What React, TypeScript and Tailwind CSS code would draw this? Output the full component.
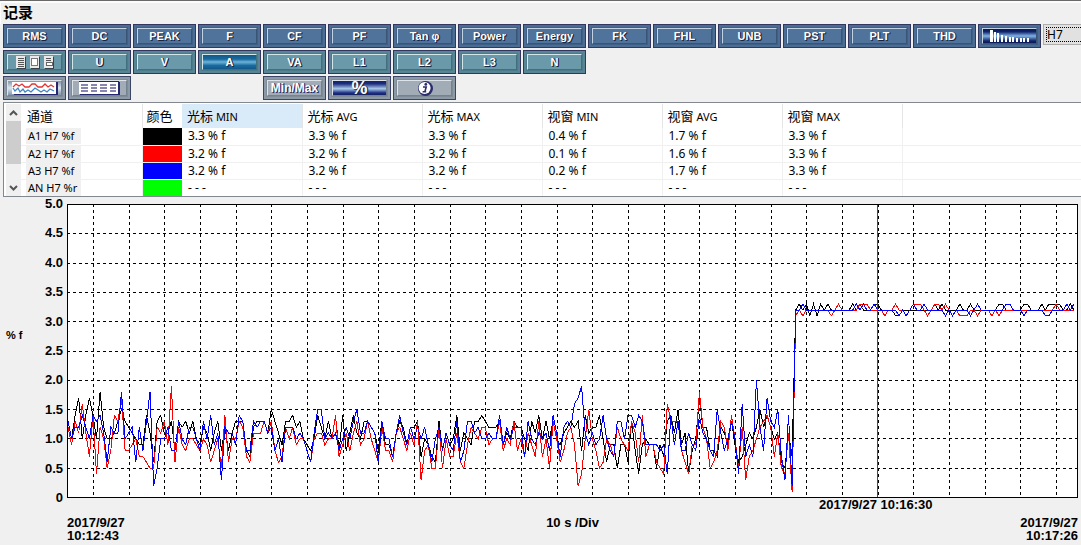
import React from "react";
import clsx from "clsx";

type Tone = "blue" | "teal" | "gray";

interface ToolButtonProps {
  tone: Tone;
  label: string;
  face?: string;
  children?: React.ReactNode;
}

const frameTones: Record<Tone, string> = {
  blue: "border-[#33375f] bg-[#4a6c95]",
  teal: "border-[#33375f] bg-[#588595]",
  gray: "border-[#3c4468] bg-[#8c99a6]",
};

const faceTones: Record<Tone, string> = {
  blue: "border-t-[#c3d2e2] border-l-[#c3d2e2] border-r-[#3a5474] border-b-[#3a5474] bg-[#50739b] outline-[#3f5f85]",
  teal: "border-t-[#d3e6ea] border-l-[#d3e6ea] border-r-[#41707c] border-b-[#41707c] bg-[#6a9aa9] outline-[#4c7a88]",
  gray: "border-t-[#dde3e8] border-l-[#dde3e8] border-r-[#75828f] border-b-[#75828f] bg-[#a1acb6] outline-[#7f8c98]",
};

const ToolButton: React.FC<ToolButtonProps> = ({ tone, label, face, children }) => (
  <button
    type="button"
    aria-label={label}
    className={clsx("h-6 w-[63px] shrink-0 border p-[3px]", frameTones[tone])}
  >
    <span
      className={clsx(
        "flex h-full w-full items-center justify-center border leading-none font-bold text-white outline outline-1",
        faceTones[tone],
        face ?? "text-[11px] [text-shadow:1px_0_0_#1a2540,1px_1px_0_#1a2540]"
      )}
    >
      {children ?? label}
    </span>
  </button>
);

const quantities = [
  "RMS", "DC", "PEAK", "F", "CF", "PF", "Tan φ", "Power",
  "Energy", "FK", "FHL", "UNB", "PST", "PLT", "THD",
];

const phases = ["U", "V", "A", "VA", "L1", "L2", "L3", "N"];

const HarmonicsIcon = () => (
  <svg className="shrink-0" width="42" height="14" viewBox="0 0 42 14" fill="#fff" shapeRendering="crispEdges">
    {[12, 10, 9, 7, 6, 5, 5, 4, 4, 4, 4].map((h, i) => (
      <rect key={i} x={1 + Math.round(i * 3.7)} y={13 - h} width={i === 0 ? 3 : 2} height={h} />
    ))}
  </svg>
);

const PagesIcon = () => (
  <svg className="shrink-0" width="40" height="14" viewBox="0 0 40 14" shapeRendering="crispEdges">
    {[1, 15, 29].map((x) => (
      <g key={x}>
        <rect x={x + 1} y="2" width="9" height="12" fill="#3a4248" />
        <rect x={x} y="1" width="9" height="12" fill="#e9e9e9" />
      </g>
    ))}
    <path d="M3 3.500h6M3 5.500h6M3 7.500h6M3 9.500h6M3 11.500h6M31 3.500h5M31 5.500h5" stroke="#555" />
    <rect x="16.5" y="3.5" width="6" height="7" fill="#fff" stroke="#777" />
    <path d="M31.500 7.500h6v3h-6z" fill="#fff" stroke="#666" />
  </svg>
);

const TrendIcon = () => (
  <svg className="shrink-0" width="46" height="14" viewBox="0 0 46 14">
    <rect x="2" y="1" width="44" height="13" fill="#26286f" />
    <rect width="44" height="12" y="1" fill="#fff" />
    <path d="M1 6l3-3 3 2 3-2 3 3 4 0 3-3 3 0 3 3 4 0 3-3 3 3 3-2 3 2" fill="none" stroke="#e23434" strokeWidth="1.3" />
    <path d="M1 7l2 3 3-3 2 4 3-3 2 3 3-2 3 2 4-4 3 2 3 2 3-2 3 2 3-3 4 2" fill="none" stroke="#3c86c6" strokeWidth="1.3" />
  </svg>
);

const TableIcon = () => (
  <svg className="shrink-0" width="41" height="14" viewBox="0 0 41 14" shapeRendering="crispEdges">
    <rect x="1" y="1" width="40" height="13" fill="#26286f" />
    <rect y="1" width="39" height="12" fill="#fff" />
    <rect width="40" height="1" fill="#26286f" />
    <path
      d="M2 4h7M12 4h6M21 4h7M31 4h6M2 7h7M12 7h6M21 7h7M31 7h6M2 10h7M12 10h6M21 10h7M31 10h6"
      stroke="#8686b0"
      strokeWidth="2"
    />
  </svg>
);

const InfoIcon = () => (
  <svg className="shrink-0" width="16" height="16" viewBox="0 0 16 16">
    <circle cx="8.5" cy="8.5" r="7.5" fill="#2a2c6c" />
    <circle cx="7.6" cy="8" r="6" fill="#fff" />
    <circle cx="8.8" cy="4.4" r="1.4" fill="#2a2c6c" />
    <path d="M6 7h3.2L7.9 11.6h1.3M5.6 11.8h3.6" fill="none" stroke="#2a2c6c" strokeWidth="1.6" />
  </svg>
);

const Toolbar = () => (
  <div className="flex flex-col gap-[2px] pl-[3px]">
    <div className="flex gap-[2px]">
      {quantities.map((q) => (
        <ToolButton key={q} tone="blue" label={q} />
      ))}
      <ToolButton
        tone="blue"
        label="Harmonics"
        face="bg-[linear-gradient(#0b1858,#12246c_20%,#7fb4e4_50%,#12246c_85%,#0b1858)]"
      >
        <HarmonicsIcon />
      </ToolButton>
      <button
        type="button"
        className="h-[21px] min-w-10 flex-1 border border-r-0 border-[#adadad] bg-[#e1e1e1] p-[2px] pr-0 text-left font-['Noto_Sans',sans-serif] text-xs leading-none"
      >
        <span className="flex h-full items-center border border-r-0 border-dotted border-black">H7</span>
      </button>
    </div>
    <div className="flex gap-[2px]">
      <ToolButton tone="teal" label="Pages">
        <PagesIcon />
      </ToolButton>
      {phases.map((p) => (
        <ToolButton
          key={p}
          tone="teal"
          label={p}
          face={
            p === "A"
              ? "text-[11px] [text-shadow:1px_0_0_#1a2540,1px_1px_0_#1a2540] bg-[linear-gradient(#11588c,#1a6a9e_30%,#6db4dc_50%,#1a6a9e_75%,#11588c)]"
              : undefined
          }
        />
      ))}
    </div>
    <div className="flex gap-[2px]">
      <ToolButton tone="gray" label="Trend" face="bg-[linear-gradient(#8295ac,#dbe7f2_50%,#8295ac)]">
        <TrendIcon />
      </ToolButton>
      <ToolButton tone="gray" label="Table">
        <TableIcon />
      </ToolButton>
      <div className="w-32" />
      <ToolButton
        tone="gray"
        label="Min/Max"
        face="text-xs [text-shadow:1px_0_0_#2a2c6c,1px_1px_0_#2a2c6c]"
      />
      <ToolButton
        tone="gray"
        label="%"
        face="text-[18px] [text-shadow:1px_0_0_#1a2540,1px_1px_0_#1a2540] bg-[linear-gradient(#14206a,#1d2f80_20%,#a9c9ec_55%,#1d2f80_85%,#14206a)]"
      />
      <ToolButton tone="gray" label="Info">
        <InfoIcon />
      </ToolButton>
    </div>
  </div>
);

const columns: [string, string][] = [
  ["光标", "MIN"],
  ["光标", "AVG"],
  ["光标", "MAX"],
  ["视窗", "MIN"],
  ["视窗", "AVG"],
  ["视窗", "MAX"],
];

const channels = [
  { name: "A1 H7 %f", color: "bg-black", values: ["3.3 % f", "3.3 % f", "3.3 % f", "0.4 % f", "1.7 % f", "3.3 % f"] },
  { name: "A2 H7 %f", color: "bg-[#ff0000]", values: ["3.2 % f", "3.2 % f", "3.2 % f", "0.1 % f", "1.6 % f", "3.3 % f"] },
  { name: "A3 H7 %f", color: "bg-[#0000ff]", values: ["3.2 % f", "3.2 % f", "3.2 % f", "0.2 % f", "1.7 % f", "3.3 % f"] },
  { name: "AN H7 %r", color: "bg-[#00ff00]", values: ["- - -", "- - -", "- - -", "- - -", "- - -", "- - -"] },
];

const Chevron: React.FC<{ d: string }> = ({ d }) => (
  <svg width="15" height="17" viewBox="0 0 15 17" fill="none" stroke="#555" strokeWidth="2">
    <path d={d} />
  </svg>
);

const ChannelTable = () => (
  <div className="mt-[2px] ml-[3px] flex border border-r-0 border-[#828790] bg-white pt-px pl-[2px] font-['Noto_Sans','Noto_Sans_CJK_SC',sans-serif] text-xs">
    <div className="flex w-[15px] shrink-0 flex-col justify-between bg-[#f0f0f0]">
      <div>
        <Chevron d="M4 11l3.500-3.500L11 11" />
        <div className="h-[43px] bg-[#cdcdcd]" />
      </div>
      <Chevron d="M4 7l3.500 3.500L11 7" />
    </div>
    <table className="w-full table-fixed border-collapse">
      <thead>
        <tr className="h-6 text-left leading-none">
          <th className="w-[121px] border-r border-[#e5e5e5] pl-[6px] text-[13px] font-normal">通道</th>
          <th className="w-10 pl-1 text-[13px] font-normal">颜色</th>
          {columns.map(([kind, stat], i) => (
            <th
              key={i}
              className={clsx(
                "w-[120px] border-r border-[#e5e5e5] pl-[5px] text-[11px] font-normal",
                i === 0 && "bg-[#d9ebf9]"
              )}
            >
              <span className="text-[13px]">{kind}</span> {stat}
            </th>
          ))}
          <th />
        </tr>
      </thead>
      <tbody>
        {channels.map((c) => (
          <tr key={c.name} className="h-[17px] border-b border-[#f0f0f0] leading-4 whitespace-pre last:border-b-0">
            <td className="border-r border-[#f0f0f0] pl-[5px]">
              <div className="w-[55px] bg-[#f0f0f0] pl-[2px] text-[11px]">{c.name}</div>
            </td>
            <td className={c.color} />
            {c.values.map((v, i) => (
              <td key={i} className="border-r border-[#f0f0f0] pl-[6px]">{v}</td>
            ))}
            <td />
          </tr>
        ))}
      </tbody>
    </table>
  </div>
);

// One sample per second, in tenths of a percent, up to the load step
const a1 = [
  13, 10, 14, 17, 10, 14, 17, 14, 10, 18, 12, 10, 10, 11, 13, 15, 13, 12, 11, 10, 9, 9, 14, 11, 6, 13, 14, 11, 11, 13,
  8, 13, 12, 13, 11, 13, 10, 9, 12, 11, 8, 11, 13, 8, 12, 8, 11, 13, 13, 13, 8, 7, 12, 13, 13, 13, 11, 15, 13, 11,
  9, 13, 13, 14, 12, 13, 10, 9, 8, 10, 14, 12, 10, 13, 10, 14, 8, 14, 8, 11, 14, 11, 10, 13, 13, 12, 11, 8, 13, 9,
  9, 7, 11, 13, 12, 9, 12, 12, 13, 7, 10, 9, 7, 6, 13, 8, 11, 9, 10, 14, 8, 11, 10, 9, 13, 13, 14, 13, 12, 12,
  12, 13, 9, 11, 10, 13, 12, 12, 10, 8, 13, 11, 14, 10, 13, 10, 13, 10, 9, 11, 12, 13, 12, 13, 8, 14, 11, 12, 12, 14,
  10, 6, 9, 9, 5, 9, 9, 6, 13, 8, 4, 9, 10, 9, 9, 5, 9, 7, 13, 14, 11, 15, 9, 11, 4, 8, 10, 17, 12, 12,
  8, 8, 7, 12, 11, 9, 13, 9, 6, 7, 9, 11, 10, 12, 15, 12, 14, 12, 10, 11, 6, 5, 11, 7,
];

const a2 = [
  12, 9, 13, 11, 16, 11, 7, 14, 4, 12, 10, 5, 8, 14, 13, 17, 8, 8, 9, 10, 7, 7, 6, 5, 5, 12, 11, 13, 9, 19,
  6, 12, 9, 8, 10, 10, 9, 8, 10, 9, 6, 8, 10, 5, 14, 6, 10, 10, 13, 12, 7, 6, 11, 11, 11, 13, 11, 13, 8, 6,
  7, 12, 10, 12, 9, 10, 10, 8, 6, 10, 11, 11, 9, 10, 10, 14, 7, 9, 11, 8, 11, 13, 9, 10, 13, 10, 8, 6, 12, 8,
  8, 6, 11, 12, 10, 8, 11, 9, 13, 3, 8, 9, 5, 5, 12, 5, 10, 7, 7, 11, 6, 5, 9, 12, 11, 10, 12, 12, 9, 10,
  10, 13, 8, 10, 9, 13, 8, 10, 7, 11, 9, 7, 13, 7, 10, 5, 13, 10, 6, 8, 11, 12, 9, 2, 4, 10, 15, 10, 8, 5,
  6, 10, 9, 7, 12, 10, 9, 8, 13, 11, 6, 14, 7, 9, 9, 6, 5, 4, 16, 13, 13, 13, 8, 6, 4, 9, 9, 18, 12, 10,
  5, 6, 8, 13, 12, 8, 14, 10, 5, 12, 3, 7, 8, 10, 12, 13, 14, 12, 7, 11, 5, 4, 11, 1,
];

const a3 = [
  13, 10, 12, 12, 14, 12, 10, 14, 13, 14, 11, 6, 12, 11, 11, 18, 10, 11, 12, 6, 12, 8, 13, 18, 2, 5, 10, 10, 12, 8,
  8, 13, 10, 9, 12, 12, 10, 8, 13, 10, 14, 9, 11, 3, 12, 11, 11, 9, 14, 13, 8, 8, 13, 12, 13, 13, 11, 12, 8, 10,
  6, 12, 12, 12, 10, 11, 10, 8, 6, 11, 15, 15, 10, 11, 10, 11, 8, 10, 12, 10, 13, 15, 11, 11, 13, 12, 11, 6, 13, 10,
  10, 7, 11, 14, 11, 9, 12, 10, 12, 10, 12, 9, 6, 10, 12, 8, 11, 9, 8, 13, 6, 8, 13, 13, 11, 12, 10, 10, 11, 10,
  10, 14, 9, 12, 10, 12, 12, 12, 7, 13, 10, 9, 11, 10, 11, 8, 14, 11, 7, 12, 13, 12, 16, 17, 19, 11, 9, 11, 9, 10,
  14, 10, 8, 7, 13, 13, 10, 14, 14, 12, 14, 13, 9, 9, 9, 9, 8, 9, 4, 14, 9, 13, 8, 8, 11, 9, 8, 14, 11, 10,
  8, 7, 15, 11, 8, 10, 13, 10, 4, 16, 7, 9, 7, 20, 12, 8, 17, 13, 12, 15, 7, 3, 14, 2,
];

// After the step everything sits at 3.2, apart from these seconds
const plateau = (high: number[], low: number[]) =>
  Array.from({ length: 79 }, (_, i) => {
    const t = i + 204;
    return high.includes(t) ? 33 : low.includes(t) ? 31 : 32;
  });

const series = [
  {
    color: "#000",
    data: [
      ...a1,
      ...plateau(
        [205, 207, 209, 211, 213, 220, 222, 226, 227, 243, 245, 250, 253, 261, 262, 268, 269, 273, 275, 276, 277, 278, 281],
        [208, 210, 232, 233]
      ),
    ],
  },
  {
    color: "#f00",
    data: [
      ...a2,
      ...plateau(
        [216, 222, 223, 224, 232, 237, 238, 239, 243, 244, 246, 277],
        [204, 206, 214, 229, 235, 241, 248, 250, 251, 252, 255, 259, 261]
      ),
    ],
  },
  {
    color: "#00f",
    data: [
      ...a3,
      ...plateau([206, 221, 223, 226, 237, 240, 255, 263, 264, 280, 282], [233, 235, 246, 248, 253, 268, 274, 275]),
    ],
  },
];

const PLOT_W = 1011;
const PLOT_H = 294;
const STEP = 3.567;

const toPoints = (data: number[]) =>
  data.map((v, i) => `${(i * STEP + 1).toFixed(1)},${(293.5 - v * 5.86).toFixed(1)}`).join(" ");

const yLabels = ["5.0", "4.5", "4.0", "3.5", "3.0", "2.5", "2.0", "1.5", "1.0", "0.5", "0"];

const Plot = () => (
  <svg
    className="block h-[294px] w-full bg-white"
    viewBox={`0 0 ${PLOT_W} ${PLOT_H}`}
    preserveAspectRatio="none"
    shapeRendering="crispEdges"
    fill="none"
    role="img"
    aria-label="% f"
  >
    <g stroke="#000" strokeDasharray="3 3">
      {yLabels.slice(1, -1).map((l, i) => (
        <line key={l} x1="0" x2={PLOT_W} y1={Math.round((i + 1) * 29.3) + 0.5} y2={Math.round((i + 1) * 29.3) + 0.5} />
      ))}
      {Array.from({ length: 28 }, (_, i) => Math.round(26 + i * 35.67) + 0.5).map((x) => (
        <line key={x} x1={x} x2={x} y1="0" y2={PLOT_H} />
      ))}
    </g>
    {series.map((s) => (
      <polyline key={s.color} points={toPoints(s.data)} stroke={s.color} vectorEffect="non-scaling-stroke" />
    ))}
    <line x1="810.5" x2="810.5" y1="0" y2={PLOT_H} stroke="#f00" vectorEffect="non-scaling-stroke" />
    <rect x="0.5" y="0.5" width={PLOT_W - 1} height={PLOT_H - 1} stroke="#000" vectorEffect="non-scaling-stroke" />
  </svg>
);

const Chart = () => (
  <div className="flex pr-[3px] text-[13px] leading-[14px] font-bold">
    <div className="flex h-[308px] w-[67px] shrink-0 items-center justify-between pr-1 pl-[6px]">
      <span className="pb-8 text-[11px]">% f</span>
      <div className="flex h-full flex-col justify-between text-right">
        {yLabels.map((l) => (
          <span key={l}>{l}</span>
        ))}
      </div>
    </div>
    <div className="min-w-0 flex-1 pt-[7px]">
      <div className="relative">
        <Plot />
        <span className="absolute top-full left-[80%] -translate-x-1/2 whitespace-nowrap">2017/9/27 10:16:30</span>
      </div>
      <div className="flex justify-between pt-[18px] leading-[13px]">
        <div className="flex-1">
          2017/9/27
          <br />
          10:12:43
        </div>
        <div>10 s /Div</div>
        <div className="flex-1 text-right">
          2017/9/27
          <br />
          10:17:26
        </div>
      </div>
    </div>
  </div>
);

export default function App() {
  return (
    <main className="min-h-screen overflow-hidden border-t border-[#696969] bg-[#f0f0f0] font-['Liberation_Sans','Noto_Sans_CJK_SC',sans-serif] text-black">
      <div className="border-t-2 border-l border-[#fcfcfc]">
        <h1 className="h-[21px] pl-[2px] text-[15px] leading-5 font-bold">记录</h1>
      </div>
      <Toolbar />
      <ChannelTable />
      <Chart />
    </main>
  );
}
